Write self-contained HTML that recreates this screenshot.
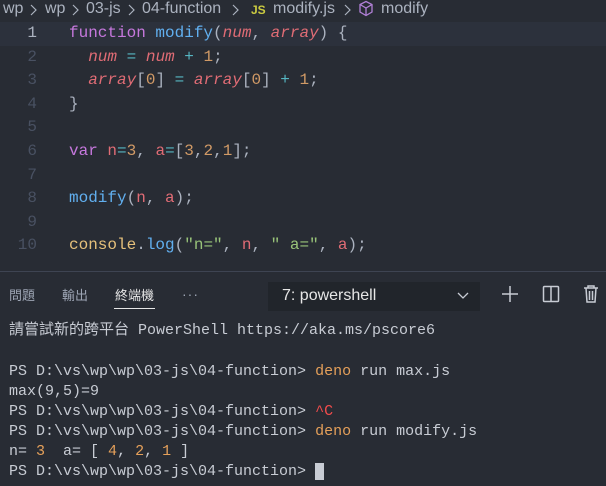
<!DOCTYPE html>
<html><head><meta charset="utf-8"><style>
body{margin:0;width:606px;height:485px;overflow:hidden;background:#282c34;font-family:"Liberation Sans","Noto Sans CJK TC",sans-serif;position:relative}
.bc{position:absolute;top:0;font-size:16px;color:#abb2bf;line-height:18px;white-space:nowrap}
.ch{position:absolute;top:3px}
.code{position:absolute;top:22px;left:0;width:606px;font-family:"Liberation Mono",monospace;font-size:16px}
.ln{height:23.6px;line-height:23.6px;position:relative;white-space:pre}
.ln .n{position:absolute;left:0;width:37px;text-align:right;color:#495162}
.ln .c{position:absolute;left:69px;color:#abb2bf}
.hl{background:#2c313c}
.k{color:#c678dd}.f{color:#61afef}.p{color:#e06c75;font-style:italic}.o{color:#56b6c2}.num{color:#d19a66}.str{color:#98c379}
.panel{position:absolute;top:271px;left:0;width:606px;height:214px;background:#282c34;border-top:1px solid #3e4452}
.tab{position:absolute;top:13px;font-size:13px;color:#9da5b4}
.term{position:absolute;left:9px;font-family:"Liberation Mono","Noto Sans CJK TC",monospace;font-size:15px;color:#c8ccd4;white-space:pre;line-height:20px}
.y{color:#e5a05a}.r{color:#f14c4c}
</style></head><body>
<span class="bc" style="left:3px">wp</span>
<svg class="ch" style="left:29px" width="8" height="14"><path d="M2 2l5 5-5 5" stroke="#abb2bf" fill="none" stroke-width="1.2"/></svg>
<span class="bc" style="left:45px">wp</span>
<svg class="ch" style="left:71px" width="8" height="14"><path d="M2 2l5 5-5 5" stroke="#abb2bf" fill="none" stroke-width="1.2"/></svg>
<span class="bc" style="left:86px">03-js</span>
<svg class="ch" style="left:127px" width="8" height="14"><path d="M2 2l5 5-5 5" stroke="#abb2bf" fill="none" stroke-width="1.2"/></svg>
<span class="bc" style="left:142px">04-function</span>
<svg class="ch" style="left:231px" width="8" height="14"><path d="M2 2l5 5-5 5" stroke="#abb2bf" fill="none" stroke-width="1.2"/></svg>
<span class="bc" style="left:251px;top:1px;font-size:12px;font-weight:bold;color:#cbcb41">JS</span>
<span class="bc" style="left:273px">modify.js</span>
<svg class="ch" style="left:343px" width="8" height="14"><path d="M2 2l5 5-5 5" stroke="#abb2bf" fill="none" stroke-width="1.2"/></svg>
<svg style="position:absolute;left:358px;top:0" width="16" height="17"><path d="M8 1.5l6 3v7.5l-6 3.5-6-3.5V4.5zM2 4.5l6 3.5 6-3.5M8 8v7.5" stroke="#b180d7" fill="none" stroke-width="1.3"/></svg>
<span class="bc" style="left:381px">modify</span>
<div class="code">
<div class="ln hl"><span class="n" style="color:#abb2bf">1</span><span class="c"><span class="k">function</span> <span class="f">modify</span>(<span class="p">num</span>, <span class="p">array</span>) {</span></div>
<div class="ln"><span class="n">2</span><span class="c">  <span class="p">num</span> <span class="o">=</span> <span class="p">num</span> <span class="o">+</span> <span class="num">1</span>;</span></div>
<div class="ln"><span class="n">3</span><span class="c">  <span class="p">array</span>[<span class="num">0</span>] <span class="o">=</span> <span class="p">array</span>[<span class="num">0</span>] <span class="o">+</span> <span class="num">1</span>;</span></div>
<div class="ln"><span class="n">4</span><span class="c">}</span></div>
<div class="ln"><span class="n">5</span></div>
<div class="ln"><span class="n">6</span><span class="c"><span class="k">var</span> <span style="color:#e06c75">n</span><span class="o">=</span><span class="num">3</span>, <span style="color:#e06c75">a</span><span class="o">=</span>[<span class="num">3</span>,<span class="num">2</span>,<span class="num">1</span>];</span></div>
<div class="ln"><span class="n">7</span></div>
<div class="ln"><span class="n">8</span><span class="c"><span class="f">modify</span>(<span style="color:#e06c75">n</span>, <span style="color:#e06c75">a</span>);</span></div>
<div class="ln"><span class="n">9</span></div>
<div class="ln"><span class="n">10</span><span class="c"><span style="color:#e5c07b">console</span>.<span class="f">log</span>(<span class="str">"n="</span>, <span style="color:#e06c75">n</span>, <span class="str">" a="</span>, <span style="color:#e06c75">a</span>);</span></div>
</div>
<div class="panel">
<span class="tab" style="left:9px">問題</span>
<span class="tab" style="left:62px">輸出</span>
<span class="tab" style="left:115px;color:#e6e6e6">終端機</span>
<div style="position:absolute;left:114px;top:36px;width:41px;height:1px;background:#e6e6e6"></div>
<span style="position:absolute;left:182px;top:14px;font-size:14px;color:#9da5b4;letter-spacing:1px">···</span>
<div style="position:absolute;left:268px;top:10px;width:212px;height:29px;background:#21252b"></div>
<span style="position:absolute;left:282px;top:15px;font-size:16px;color:#e6e6e6">7: powershell</span>
<svg style="position:absolute;left:456px;top:19px" width="14" height="10"><path d="M2 2l5 5 5-5" stroke="#c8ccd4" fill="none" stroke-width="1.3"/></svg>
<svg style="position:absolute;left:500px;top:12px" width="20" height="20"><path d="M10 2v16M2 10h16" stroke="#c8ccd4" stroke-width="1.5"/></svg>
<svg style="position:absolute;left:542px;top:13px" width="18" height="18"><rect x="1.5" y="1.5" width="15" height="15" rx="1" fill="none" stroke="#c8ccd4" stroke-width="1.5"/><path d="M9 2v14" stroke="#c8ccd4" stroke-width="1.5"/></svg>
<svg style="position:absolute;left:583px;top:12px" width="16" height="20"><path d="M1 4h14M5 4V2h6v2M3 4l1 14h8l1-14M6.5 7v9M9.5 7v9" stroke="#c8ccd4" fill="none" stroke-width="1.5"/></svg>
<div class="term" style="top:49px">請嘗試新的跨平台 PowerShell https://aka.ms/pscore6</div>
<div class="term" style="top:90px">PS D:\vs\wp\wp\03-js\04-function&gt; <span class="y">deno</span> run max.js
max(9,5)=9
PS D:\vs\wp\wp\03-js\04-function&gt; <span class="r">^C</span>
PS D:\vs\wp\wp\03-js\04-function&gt; <span class="y">deno</span> run modify.js
n= <span class="y">3</span>  a= [ <span class="y">4</span>, <span class="y">2</span>, <span class="y">1</span> ]
PS D:\vs\wp\wp\03-js\04-function&gt; <span style="background:#c8ccd4"> </span></div>
</div>
</body></html>
